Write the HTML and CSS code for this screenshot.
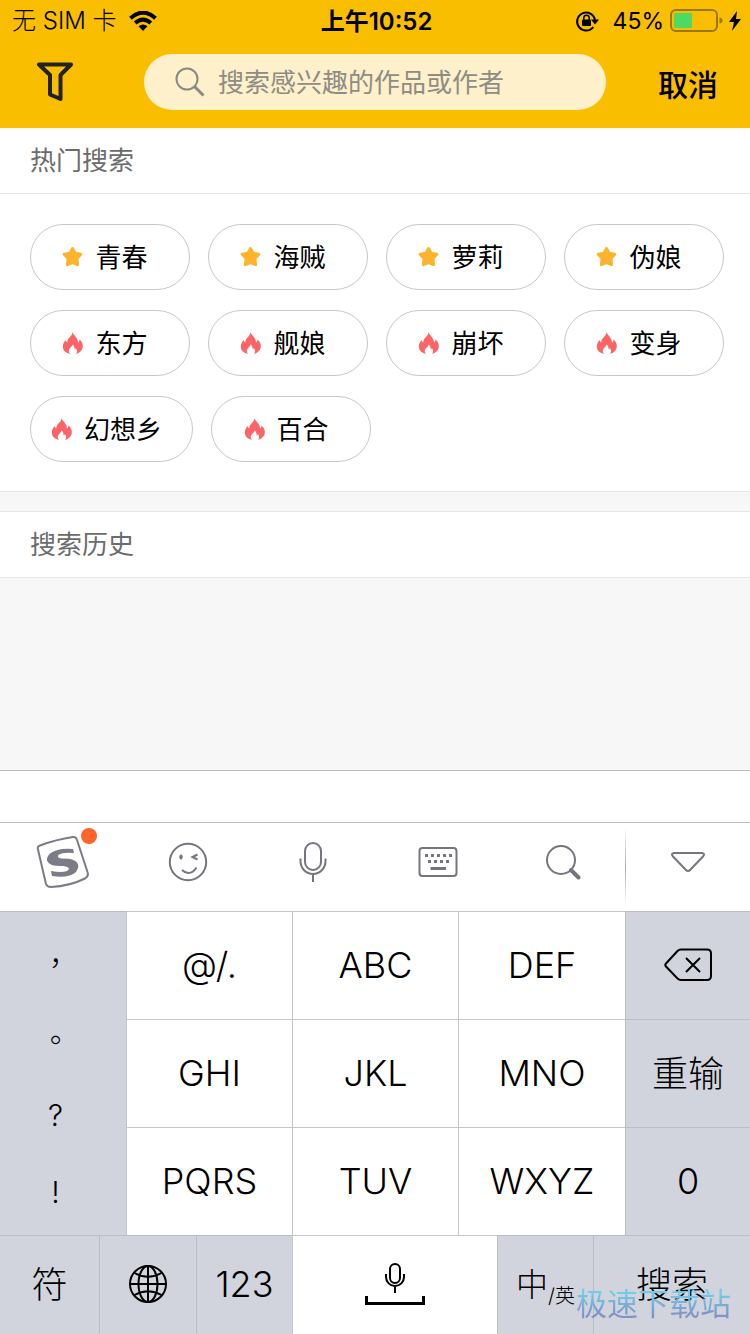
FILE: index.html
```html
<!DOCTYPE html>
<html lang="zh-CN">
<head>
<meta charset="utf-8">
<meta name="viewport" content="width=device-width, initial-scale=1">
<title>搜索</title>
<link rel="stylesheet" href="styles.css">
</head>
<body>
<svg class="defs" aria-hidden="true">
  <symbol id="star" viewBox="0 0 22 22"><path d="M10.500 2.500 13 7.300 18.800 8.200 14.900 12.400 15.600 18.600 10.500 16.600 5.400 18.600 6.100 12.400 2.200 8.200 8 7.300Z" fill="#fbb42c" stroke="#fbb42c" stroke-width="3" stroke-linejoin="round"/></symbol>
  <symbol id="fire" viewBox="0 0 22 22"><path d="M10.500 0C11.500 3.500 16 5.500 16 10.500C17 10 17.500 9 17.500 7.500C19.500 9 21 11.500 20.800 14.500C20.600 18.500 17.500 21 14 21.800C15.300 20.500 15.500 18 13.800 16C13.500 17 13.200 17.300 12.600 17.500C12.800 15.500 12 13.500 10.500 12.600C10.500 15 6.800 16 6.800 19C6.900 20.300 7.500 21.300 8.300 21.800C4 21.200 .8 18.500 .8 14.500C.8 11.500 2.500 9.500 3.500 8C4 9.500 4.500 10 5.300 10.400C5 6 10.500 4.500 10.500 0Z" fill="#fc6468"/></symbol>
</svg>
<header class="header">
  <div class="status">
    <div class="status-left"><span>无 SIM 卡</span>
      <svg width="28" height="20" viewBox="0 0 28 20"><g fill="none" stroke="#000" stroke-width="4"><path d="M1.500 7.200Q14-4 26.500 7.200"/><path d="M6.200 12Q14 5.200 21.800 12"/></g><path d="M9.500 15.300Q14 11.800 18.500 15.300L14 20Z"/></svg>
    </div>
    <div class="status-time">上午10:52</div>
    <div class="status-right">
      <svg class="lock" width="24" height="22" viewBox="0 0 24 22"><path d="M18.300 17A9 9 0 1 1 20 10" fill="none" stroke="#000" stroke-width="2"/><path d="M16 9.500H24L20 14.500Z"/><rect x="7" y="9.500" width="9" height="6.500" rx="1"/><path d="M8.800 10V8a2.700 2.700 0 0 1 5.400 0v2" fill="none" stroke="#000" stroke-width="1.500"/></svg>
      <span>45%</span>
      <svg width="53" height="24" viewBox="0 0 53 24"><rect x="1" y="1" width="46" height="21" rx="5" fill="none" stroke="#9b770a" stroke-width="2"/><rect x="4" y="4" width="18" height="15" rx="1" fill="#4cd964"/><path d="M49.500 8.500Q52.500 9 52.500 11.500T49.500 14.500Z" fill="#9b770a"/></svg>
      <svg width="12" height="20" viewBox="0 0 12 20"><path d="M8 0 0 11H5L3 20 12 8H7Z"/></svg>
    </div>
  </div>
  <div class="searchbar">
    <button class="filter" aria-label="筛选"><svg width="38" height="42" viewBox="0 0 38 42"><path d="M3 3.500H35L24.500 14V38L14 33.500V14Z" fill="none" stroke="#222" stroke-width="4" stroke-linejoin="round"/></svg></button>
    <label class="field">
      <svg width="30" height="30" viewBox="0 0 30 30" fill="none" stroke="#8b8983"><circle cx="12" cy="12" r="10.500" stroke-width="2"/><path d="M19.500 19.500 28.500 28.500" stroke-width="3"/></svg>
      <input type="search" placeholder="搜索感兴趣的作品或作者" aria-label="搜索">
    </label>
    <button class="cancel">取消</button>
  </div>
</header>
<main class="content">
  <section class="panel">
    <h2 class="title">热门搜索</h2>
    <div class="tags">
      <button class="tag"><svg><use href="#star"/></svg>青春</button>
      <button class="tag"><svg><use href="#star"/></svg>海贼</button>
      <button class="tag"><svg><use href="#star"/></svg>萝莉</button>
      <button class="tag"><svg><use href="#star"/></svg>伪娘</button>
      <button class="tag"><svg><use href="#fire"/></svg>东方</button>
      <button class="tag"><svg><use href="#fire"/></svg>舰娘</button>
      <button class="tag"><svg><use href="#fire"/></svg>崩坏</button>
      <button class="tag"><svg><use href="#fire"/></svg>变身</button>
      <button class="tag"><svg><use href="#fire"/></svg>幻想乡</button>
      <button class="tag"><svg><use href="#fire"/></svg>百合</button>
    </div>
  </section>
  <section class="panel history">
    <h2 class="title">搜索历史</h2>
  </section>
</main>
<section class="keyboard" aria-label="键盘">
  <div class="candidates"></div>
  <div class="tools">
    <button class="tool" aria-label="输入法菜单"><span class="logo">
      <svg width="54" height="54" viewBox="0 0 54 54"><path d="M4 10.500Q20 4.500 37 2Q40 1.500 41 5L51.500 37Q53 41 49 43.500Q34 51 15 52Q11 52 10 49L2 14.500Q1 11.500 4 10.500Z" fill="none" stroke="#7b7c85" stroke-width="2"/><path d="M37 14Q22 12.500 14 18.500Q7 26 16 30Q19 31 27 31Q33 31.500 33 34Q31 38.500 15 36L16 41Q33 43.500 40 37Q46 28 36 24.500Q33 23.500 26 23.500Q21 23 22 20.500Q25 17 38 18Z" fill="#7b7c85"/></svg>
      <i class="dot"></i></span></button>
    <button class="tool" aria-label="表情"><svg width="40" height="40" viewBox="0 0 40 40" fill="none" stroke="#75767d" stroke-width="2"><circle cx="20" cy="20" r="18.200"/><ellipse cx="13" cy="15" rx="1.200" ry="2.200" fill="#75767d" stroke-width="1"/><path d="M29.500 12.500 24.500 15 29.500 17.500M14 28Q17 31 20.500 31Q25 31 28.500 25.500"/></svg></button>
    <button class="tool" aria-label="语音"><svg width="28" height="42" viewBox="0 0 28 42" fill="none" stroke="#75767d" stroke-width="2"><rect x="6" y="2" width="16" height="27" rx="8"/><path d="M1.500 17.500V20A12.500 13 0 0 0 26.500 20V17.500M14 33V41"/></svg></button>
    <button class="tool" aria-label="切换键盘"><svg width="40" height="32" viewBox="0 0 40 32" fill="none" stroke="#75767d"><rect x="1.500" y="2" width="37" height="28" rx="3" stroke-width="2"/><path d="M7 9.500H34M10 15.500H31" stroke-width="3" stroke-dasharray="3 3"/><path d="M12.500 22.500H28" stroke-width="3"/></svg></button>
    <button class="tool" aria-label="查找"><svg width="36" height="36" viewBox="0 0 36 36" fill="none" stroke="#75767d"><circle cx="16" cy="16" r="14" stroke-width="2"/><path d="M26 26 33.500 33.500" stroke-width="4" stroke-linecap="round"/></svg></button>
    <button class="tool collapse" aria-label="收起"><svg width="36" height="22" viewBox="0 0 36 22"><path d="M4 2H32Q35.500 2.500 33 5.500L20 19Q18 21 16 19L3 5.500Q.5 2.500 4 2Z" fill="none" stroke="#75767d" stroke-width="2"/></svg></button>
  </div>
  <div class="keys">
    <div class="punct"><button class="mark" lang="zh-TW">，</button><button class="mark" lang="zh-TW">。</button><button>?</button><button>!</button></div>
    <button class="key">@/.</button>
    <button class="key">ABC</button>
    <button class="key">DEF</button>
    <button class="key grey" aria-label="删除"><svg width="50" height="34" viewBox="0 0 50 34" fill="none" stroke="#000" stroke-width="2"><path d="M18 1.500H44Q48 1.500 48 5.500V28Q48 32 44 32H18Q16 32 14.500 30.500L3 18.500Q1.500 17 3 15.500L14.500 3Q16 1.500 18 1.500Z"/><path d="M23 10 37 24M37 10 23 24"/></svg></button>
    <button class="key">GHI</button>
    <button class="key">JKL</button>
    <button class="key">MNO</button>
    <button class="key grey han">重输</button>
    <button class="key">PQRS</button>
    <button class="key">TUV</button>
    <button class="key">WXYZ</button>
    <button class="key grey">0</button>
  </div>
  <div class="bottom">
    <button class="key grey han">符</button>
    <button class="key grey" aria-label="切换语言"><svg width="40" height="40" viewBox="0 0 40 40" fill="none" stroke="#000" stroke-width="2"><circle cx="20" cy="20" r="18"/><ellipse cx="20" cy="20" rx="9.500" ry="18"/><path d="M20 2V38M2 20H38M6.500 9Q20 16.500 33.500 9M6.500 31Q20 23.500 33.500 31"/></svg></button>
    <button class="key grey">123</button>
    <button class="key" aria-label="空格"><svg width="60" height="44" viewBox="0 0 60 44" fill="none" stroke="#000" stroke-width="2"><rect x="25" y="2" width="10" height="19" rx="5"/><path d="M21 12V15A9 9 0 0 0 39 15V12M30 24V31"/><path d="M1.500 34V41.500H58.500V34" stroke-width="3"/></svg></button>
    <button class="key grey han"><span class="zh">中</span><span class="en">/英</span></button>
    <button class="key grey han">搜索</button>
  </div>
  <div class="watermark">极速下载站</div>
</section>
</body>
</html>
```
FILE: styles.css
```css
* { box-sizing: border-box; }
body {
  margin: 0;
  min-height: 100vh;
  display: flex;
  flex-direction: column;
  background: #f7f7f7;
  color: #000;
  font-family: Inter, "Noto Sans CJK SC", sans-serif;
}
svg { display: block; flex: none; }
button { margin: 0; padding: 0; border: 0; background: none; color: inherit; font: inherit; }
.defs { position: absolute; width: 0; height: 0; }

.header { background: #f9be00; }
.status {
  display: grid;
  grid-template-columns: 1fr auto 1fr;
  align-items: center;
  height: 40px;
  padding: 0 9px 0 12px;
  font-size: 24px;
  line-height: 40px;
}
.status-left, .status-right { display: flex; align-items: center; gap: 12px; }
.status-left { font-weight: 300; }
.status-time { padding-top: 2px; font-weight: 600; }
.status-right { justify-content: flex-end; gap: 6px; font-size: 23px; }
.lock { margin-right: 8px; }
.searchbar {
  display: flex;
  align-items: center;
  height: 88px;
  padding: 0 32px 4px 36px;
}
.filter { margin-right: 70px; }
.field {
  display: flex;
  flex: 1;
  align-items: center;
  gap: 13px;
  min-width: 0;
  height: 56px;
  padding: 0 31px;
  border-radius: 28px;
  background: #fdf0cb;
}
.field input {
  flex: 1;
  min-width: 0;
  height: 56px;
  padding: 0 0 3px;
  border: 0;
  outline: 0;
  background: none;
  font-family: "Noto Sans CJK SC", sans-serif;
  font-size: 26px;
}
.field input::placeholder { color: #8f8c84; opacity: 1; }
.cancel { margin-left: 52px; padding-top: 2px; font-size: 30px; font-weight: 500; }

.content { flex: 1; }
.panel { background: #fff; border-bottom: 1px solid #e6e6e6; }
.history { margin-top: 19px; border-top: 1px solid #e6e6e6; }
.title {
  margin: 0;
  height: 65px;
  padding-left: 30px;
  color: #6c6c6c;
  font-size: 26px;
  font-weight: 400;
  line-height: 66px;
}
.tags {
  display: flex;
  flex-wrap: wrap;
  gap: 20px 18px;
  padding: 30px 26px 29px 30px;
  border-top: 1px solid #e6e6e6;
}
.tag {
  display: flex;
  align-items: center;
  justify-content: center;
  gap: 11px;
  min-width: 160px;
  height: 66px;
  padding: 0 30px 3px 20px;
  border: 1px solid #c8c8c8;
  border-radius: 33px;
  font-size: 26px;
}
.tag svg { width: 22px; height: 22px; margin-top: 3px; }

.keyboard { position: relative; background: #fff; border-top: 1px solid #bbbcbe; }
.candidates { height: 51px; }
.tools {
  display: grid;
  grid-template-columns: repeat(6, 1fr);
  height: 89px;
  border-top: 1px solid #bbbcbe;
}
.tool { display: flex; align-items: center; justify-content: center; padding-bottom: 10px; }
.collapse {
  background: linear-gradient(#fff, #aaa 50%, #fff) left / 1px 80px no-repeat;
}
.logo { position: relative; }
.dot {
  position: absolute;
  top: -7px;
  right: -7px;
  width: 16px;
  height: 16px;
  border-radius: 50%;
  background: #ff6429;
}
.keys {
  display: grid;
  grid-template-columns: 126fr 166fr 166fr 167fr 125fr;
  grid-auto-rows: 108px;
}
.key {
  display: flex;
  align-items: center;
  justify-content: center;
  padding-bottom: 2px;
  border-top: 1px solid #c3c6ca;
  border-left: 1px solid #c3c6ca;
  background: #fff;
  font-size: 36px;
  font-weight: 300;
}
.han { padding-bottom: 6px; }
.grey { background: #d1d4dc; border-color: #b9bec6; }
.punct {
  grid-row: span 3;
  display: grid;
  grid-template-rows: repeat(4, 1fr);
  padding: 10px 15px 4px 0;
  border-top: 1px solid #b9bec6;
  background: #d1d4dc;
  font-size: 30px;
  font-weight: 300;
}
.mark { font-family: "Noto Sans CJK TC", sans-serif; }
.bottom {
  display: grid;
  grid-template-columns: 99fr 97fr 96fr 205fr 96fr 157fr;
  grid-auto-rows: 99px;
}
.bottom .key:first-child { border-left: 0; }
.zh { font-size: 32px; }
.en { padding-top: 24px; font-size: 20px; }
.watermark {
  position: absolute;
  right: 19px;
  bottom: 8px;
  background: linear-gradient(#74cbe8 25%, #7f93c6 75%);
  background-clip: text;
  -webkit-background-clip: text;
  color: transparent;
  font-size: 31px;
  line-height: 44px;
  pointer-events: none;
}
```
